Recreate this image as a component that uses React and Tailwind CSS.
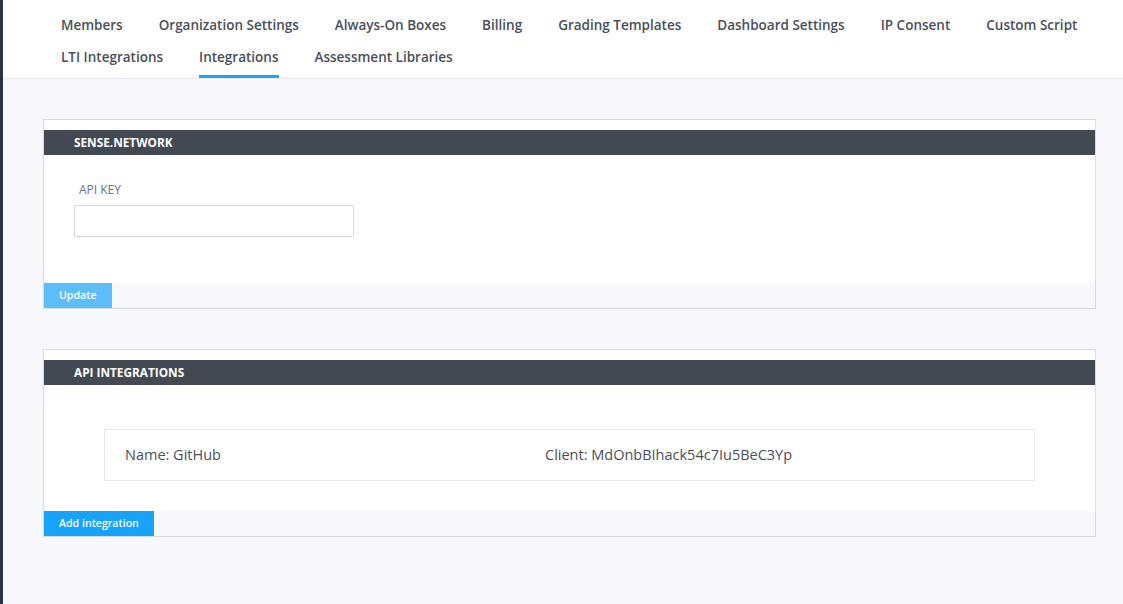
const tabsRow1 = ['Members', 'Organization Settings', 'Always-On Boxes', 'Billing', 'Grading Templates', 'Dashboard Settings', 'IP Consent', 'Custom Script'];
const tabsRow2 = ['LTI Integrations', 'Integrations', 'Assessment Libraries'];

function Tab({ label, active }) {
  return (
    <div className="flex flex-col">
      <span className="text-[13.5px] leading-[20px] font-semibold whitespace-nowrap text-[#4a4f5b]">{label}</span>
      {active && <div className="mt-[8px] h-[3px] bg-[#1ea5f8]" />}
    </div>
  );
}

function Card({ title, children, button, buttonClass }) {
  return (
    <div className="bg-white border border-[#d8dbe2] pt-[10px]">
      <div className="h-[25px] bg-[#424953] flex items-center pl-[30px]">
        <span className="text-[11.8px] font-bold text-white">{title}</span>
      </div>
      {children}
      <div className="bg-[#f7f8fc] h-[25px] flex">
        <button className={`h-[25px] text-[10.6px] font-semibold text-white px-[15px] ${buttonClass}`}>{button}</button>
      </div>
    </div>
  );
}

export default function App() {
  return (
    <div className="min-h-screen bg-[#f7f8fc] flex" style={{ fontFamily: '"Open Sans", sans-serif' }}>
      <div className="w-[3px] bg-[#283548] shrink-0" />
      <div className="flex-1">
        <div className="bg-white border-b border-[#e6e8ec] pl-[58px] pt-[15px]">
          <div className="flex gap-[36px]">
            {tabsRow1.map((t) => (
              <Tab key={t} label={t} />
            ))}
          </div>
          <div className="flex items-start gap-[36px] mt-[12px]">
            {tabsRow2.map((t) => (
              <Tab key={t} label={t} active={t === 'Integrations'} />
            ))}
          </div>
        </div>
        <div className="pl-[40px] pr-[27px] pt-[40px] flex flex-col gap-[40px]">
          <Card title="SENSE.NETWORK" button="Update" buttonClass="bg-[#5bbdfa]">
            <div className="h-[128px] pl-[30px] pt-[26px]">
              <div className="text-[12px] text-[#6b7280] pl-[5px] leading-[17px]">API KEY</div>
              <input className="mt-[7px] w-[280px] h-[32px] border border-[#d5d8e0] rounded-[2px] outline-none" />
            </div>
          </Card>
          <Card title="API INTEGRATIONS" button="Add integration" buttonClass="bg-[#18a3fb]">
            <div className="h-[126px] px-[60px] pt-[44px]">
              <div className="h-[52px] border border-[#e6e8ec] flex items-center px-[20px] text-[14.5px] text-[#4a4f5b]">
                <div className="w-[420px]">Name: GitHub</div>
                <div>Client: MdOnbBIhack54c7Iu5BeC3Yp</div>
              </div>
            </div>
          </Card>
        </div>
      </div>
    </div>
  );
}
